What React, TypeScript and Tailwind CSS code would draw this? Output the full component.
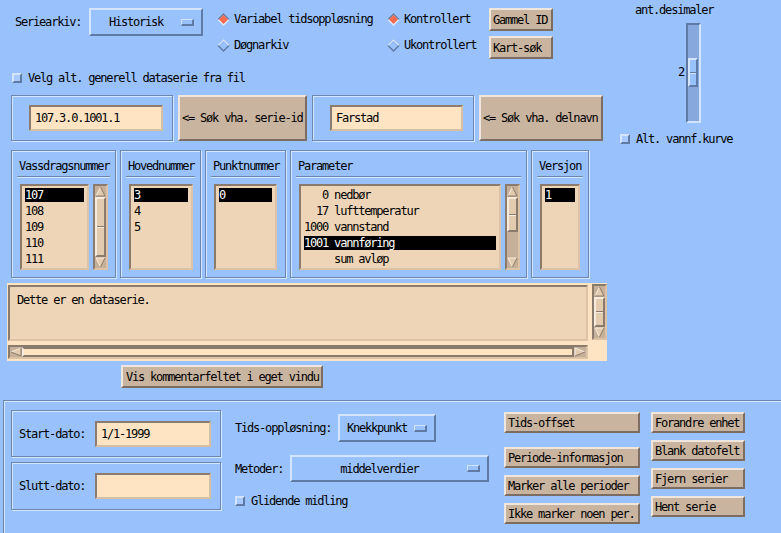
import React from "react";

const raisedTan =
  "border-2 border-t-[#efe7de] border-l-[#efe7de] border-r-[#7b6d61] border-b-[#7b6d61] bg-[#c9b49f]";
const raisedBlue =
  "border-2 border-t-[#d3e4ff] border-l-[#d3e4ff] border-r-[#5f7aa4] border-b-[#5f7aa4]";
const sunkenTan =
  "border-2 border-t-[#8b7b6d] border-l-[#8b7b6d] border-r-[#dcc3a6] border-b-[#dcc3a6]";

function Frame({ className, children }: { className: string; children?: React.ReactNode }) {
  return (
    <div className={"border border-[#6b86b1] shadow-[inset_1px_1px_0_#d5e6ff,1px_1px_0_#d5e6ff] " + className}>
      {children}
    </div>
  );
}

function Btn({ className, children }: { className: string; children: React.ReactNode }) {
  return (
    <div className={raisedTan + " flex items-center pl-[2px] whitespace-pre " + className}>{children}</div>
  );
}

function Field({ className, value }: { className: string; value?: string }) {
  return (
    <div className={"border-2 border-t-[#8a7c70] border-l-[#8a7c70] border-r-[#d9bfa2] border-b-[#d9bfa2] bg-[#ffe4c4] flex items-center pl-[4px] " + className}>
      {value}
    </div>
  );
}

function OptionMenu({ className, label }: { className: string; label: string }) {
  return (
    <div className={raisedBlue + " flex items-center " + className}>
      <span className="flex-1 text-center">{label}</span>
      <span className="w-[13px] h-[7px] mr-[7px] border-t border-l border-r-2 border-b-2 border-t-[#d3e4ff] border-l-[#d3e4ff] border-r-[#5f7aa4] border-b-[#5f7aa4]" />
    </div>
  );
}

function Radio({ on, label }: { on: boolean; label: string }) {
  return (
    <div className="flex items-center gap-[4px] h-[14px]">
      <svg width="13" height="13" viewBox="0 0 13 13" className="shrink-0">
        <polygon points="6.5,0 13,6.5 6.5,13 0,6.5" fill={on ? "#dbe9ff" : "#5f7aa4"} />
        <polygon points="0,6.5 6.5,0 13,6.5 11,6.5 6.5,2 2,6.5" fill={on ? "#5f7aa4" : "#dbe9ff"} />
        <polygon points="6.5,2 11,6.5 6.5,11 2,6.5" fill={on ? "#fa6a4e" : "#99c2fd"} />
      </svg>
      <span>{label}</span>
    </div>
  );
}

function Check({ label, className }: { label: string; className: string }) {
  return (
    <div className={"flex items-center gap-[6px] " + className}>
      <span className={raisedBlue + " w-[10px] h-[10px] bg-[#a8cafe]"} />
      <span>{label}</span>
    </div>
  );
}

function Arrow({ dir }: { dir: "up" | "down" | "left" | "right" }) {
  const light = "#f6ebdd";
  const dark = "#8b7b6d";
  if (dir === "up")
    return (
      <svg width="11" height="11" viewBox="0 0 11 11" className="shrink-0">
        <polygon points="5.5,1 10,10 1,10" fill="#e3cbb0" />
        <polyline points="1,10 5.5,1" stroke={light} fill="none" />
        <polyline points="5.5,1 10,10 1,10" stroke={dark} fill="none" />
      </svg>
    );
  if (dir === "down")
    return (
      <svg width="11" height="11" viewBox="0 0 11 11" className="shrink-0">
        <polygon points="1,1 10,1 5.5,10" fill="#e3cbb0" />
        <polyline points="5.5,10 1,1 10,1" stroke={light} fill="none" />
        <polyline points="10,1 5.5,10" stroke={dark} fill="none" />
      </svg>
    );
  if (dir === "left")
    return (
      <svg width="12" height="10" viewBox="0 0 12 10" className="shrink-0">
        <polygon points="1,5 11,1 11,9" fill="#e3cbb0" />
        <polyline points="11,1 1,5" stroke={light} fill="none" />
        <polyline points="1,5 11,9 11,1" stroke={dark} fill="none" />
      </svg>
    );
  return (
    <svg width="12" height="10" viewBox="0 0 12 10" className="shrink-0">
      <polygon points="1,1 11,5 1,9" fill="#e3cbb0" />
      <polyline points="1,9 1,1 11,5" stroke={light} fill="none" />
      <polyline points="11,5 1,9" stroke={dark} fill="none" />
    </svg>
  );
}

function VScroll({ className, thumb }: { className: string; thumb: string }) {
  return (
    <div className={sunkenTan + " flex flex-col items-center bg-[#c6b09a] " + className}>
      <Arrow dir="up" />
      <div className="flex-1 w-full flex flex-col">
        <div className={"w-full border-2 border-t-[#f6ebdd] border-l-[#f6ebdd] border-r-[#8b7b6d] border-b-[#8b7b6d] bg-[#e3cbb0] flex items-center justify-center " + thumb}>
          <span className="w-[7px] h-[2px] border-t border-b border-t-[#8b7b6d] border-b-[#f6ebdd]" />
        </div>
      </div>
      <Arrow dir="down" />
    </div>
  );
}

function ListBox({ className, rows, selected }: { className: string; rows: string[]; selected: number }) {
  return (
    <div className={sunkenTan + " bg-[#eed5b7] px-[3px] pt-[1px] overflow-hidden " + className}>
      {rows.map((row, i) => (
        <div key={i} className="h-[16px] flex items-center">
          <div className={"h-[14px] w-full whitespace-pre leading-[15px] " + (i === selected ? "bg-black text-white" : "")}>
            {row}
          </div>
        </div>
      ))}
    </div>
  );
}

function ListFrame({ className, title, children }: { className: string; title: string; children: React.ReactNode }) {
  return (
    <Frame className={"flex flex-col " + className}>
      <div className="pl-[7px] pt-[8px] h-[21px]">{title}</div>
      <div className="mx-[5px] mt-[4px] h-[2px] border-t border-b border-t-[#6b86b1] border-b-[#d5e6ff]" />
      <div className="flex gap-[4px] ml-[8px] mt-[6px]">{children}</div>
    </Frame>
  );
}

export default function App() {
  return (
    <div className="w-[781px] h-[533px] overflow-hidden flex flex-col bg-[#99c2fd] text-black text-[12px] leading-[14px] tracking-[-1.2px] font-['DejaVu_Sans_Mono',monospace]">
      {/* top area */}
      <div className="flex h-[150px] shrink-0">
        <div className="w-[610px] shrink-0">
          <div className="flex h-[66px] pt-[8px]">
            <div className="w-[89px] pl-[15px] h-[28px] flex items-center">Seriearkiv:</div>
            <OptionMenu className="w-[114px] h-[28px]" label="Historisk" />
            <div className="ml-[14px] w-[170px] pt-[4px] flex flex-col gap-[12px]">
              <Radio on label="Variabel tidsoppløsning" />
              <Radio on={false} label="Døgnarkiv" />
            </div>
            <div className="w-[102px] pt-[4px] flex flex-col gap-[12px]">
              <Radio on label="Kontrollert" />
              <Radio on={false} label="Ukontrollert" />
            </div>
            <div className="flex flex-col gap-[5px]">
              <Btn className="w-[64px] h-[23px]">Gammel ID</Btn>
              <Btn className="w-[64px] h-[23px]">Kart-søk</Btn>
            </div>
          </div>
          <Check className="ml-[12px] mt-[7px] h-[10px]" label="Velg alt. generell dataserie fra fil" />
          <div className="flex ml-[11px] mt-[12px] h-[46px] gap-[5px]">
            <Frame className="w-[162px] flex items-center pl-[17px]">
              <Field className="w-[134px] h-[26px]" value="107.3.0.1001.1" />
            </Frame>
            <Btn className="w-[129px]">{"<= Søk vha. serie-id"}</Btn>
            <Frame className="w-[162px] flex items-center pl-[17px]">
              <Field className="w-[133px] h-[26px]" value="Farstad" />
            </Frame>
            <Btn className="w-[124px]">{"<= Søk vha. delnavn"}</Btn>
          </div>
        </div>
        <div className="w-[171px] flex flex-col pt-[3px]">
          <div className="pl-[25px]">ant.desimaler</div>
          <div className="flex ml-[66px] mt-[6px]">
            <div className="w-[10px] pr-[2px] pt-[42px] text-right">2</div>
            <div className="w-[15px] h-[100px] border-2 border-t-[#5f7aa4] border-l-[#5f7aa4] border-r-[#d3e4ff] border-b-[#d3e4ff] bg-[#86a8dc]">
              <div className={raisedBlue + " w-[10px] h-[29px] mt-[33px] bg-[#99c2fd] flex items-center"}>
                <span className="w-full h-[2px] border-t border-b border-t-[#5f7aa4] border-b-[#d3e4ff]" />
              </div>
            </div>
          </div>
          <Check className="ml-[10px] mt-[11px] h-[10px]" label="Alt. vannf.kurve" />
        </div>
      </div>

      {/* lists */}
      <div className="flex ml-[11px] gap-[4px] h-[128px] shrink-0">
        <ListFrame className="w-[105px]" title="Vassdragsnummer">
          <ListBox className="w-[69px] h-[86px]" rows={["107", "108", "109", "110", "111"]} selected={0} />
          <VScroll className="w-[15px] h-[86px]" thumb="flex-1" />
        </ListFrame>
        <ListFrame className="w-[81px]" title="Hovednummer">
          <ListBox className="w-[64px] h-[86px]" rows={["3", "4", "5"]} selected={0} />
        </ListFrame>
        <ListFrame className="w-[81px]" title="Punktnummer">
          <ListBox className="w-[63px] h-[86px]" rows={["0"]} selected={0} />
        </ListFrame>
        <ListFrame className="w-[237px]" title="Parameter">
          <ListBox
            className="w-[202px] h-[86px]"
            rows={["   0 nedbør", "  17 lufttemperatur", "1000 vannstand", "1001 vannføring", "     sum avløp"]}
            selected={3}
          />
          <VScroll className="w-[15px] h-[86px]" thumb="h-[35px]" />
        </ListFrame>
        <ListFrame className="w-[58px]" title="Versjon">
          <ListBox className="w-[40px] h-[86px]" rows={["1"]} selected={0} />
        </ListFrame>
      </div>

      {/* comment */}
      <div className="ml-[7px] mt-[5px] w-[600px] h-[78px] shrink-0 bg-[#ffe4c4] pt-[2px] pl-[1px]">
        <div className="flex gap-[4px]">
          <div className={sunkenTan + " w-[580px] h-[56px] bg-[#eed5b7] px-[7px] pt-[6px]"}>Dette er en dataserie.</div>
          <VScroll className="w-[15px] h-[56px] -mt-[1px]" thumb="flex-1" />
        </div>
        <div className={sunkenTan + " mt-[4px] w-[580px] h-[14px] bg-[#c6b09a] flex items-center"}>
          <Arrow dir="left" />
          <div className="flex-1 h-full border-2 border-t-[#8b7b6d] border-l-[#f6ebdd] border-r-[#8b7b6d] border-b-[#8b7b6d] bg-[#ffe4c4]" />
          <Arrow dir="right" />
        </div>
      </div>

      <Btn className="ml-[121px] mt-[4px] w-[202px] h-[23px] shrink-0 pl-[3px]">Vis kommentarfeltet i eget vindu</Btn>

      {/* bottom */}
      <div className="ml-[3px] mt-[12px] flex-1 border-t border-l border-[#6b86b1] shadow-[inset_1px_1px_0_#d5e6ff] flex pl-[7px] pt-[9px]">
        <div className="flex flex-col gap-[5px]">
          <Frame className="w-[210px] h-[47px] flex items-center pl-[7px]">
            <div className="w-[76px]">Start-dato:</div>
            <Field className="w-[116px] h-[26px] pl-[3px]" value="1/1-1999" />
          </Frame>
          <Frame className="w-[210px] h-[48px] flex items-center pl-[7px]">
            <div className="w-[76px]">Slutt-dato:</div>
            <Field className="w-[116px] h-[26px]" />
          </Frame>
        </div>
        <div className="ml-[14px] w-[269px] pt-[4px] flex flex-col">
          <div className="flex items-center h-[28px]">
            <div className="w-[103px]">Tids-oppløsning:</div>
            <OptionMenu className="w-[98px] h-[28px]" label="Knekkpunkt" />
          </div>
          <div className="flex items-center h-[27px] mt-[13px]">
            <div className="w-[55px]">Metoder:</div>
            <OptionMenu className="w-[199px] h-[27px]" label="middelverdier" />
          </div>
          <Check className="mt-[14px] h-[10px] gap-[5px]" label="Glidende midling" />
        </div>
        <div className="w-[136px] pt-[2px] flex flex-col">
          <Btn className="h-[21px]">Tids-offset</Btn>
          <Btn className="h-[21px] mt-[14px]">Periode-informasjon</Btn>
          <Btn className="h-[21px] mt-[7px]">Marker alle perioder</Btn>
          <Btn className="h-[21px] mt-[7px]">Ikke marker noen per.</Btn>
        </div>
        <div className="ml-[11px] w-[94px] pt-[2px] flex flex-col gap-[7px]">
          <Btn className="h-[21px]">Forandre enhet</Btn>
          <Btn className="h-[21px]">Blank datofelt</Btn>
          <Btn className="h-[21px]">Fjern serier</Btn>
          <Btn className="h-[21px]">Hent serie</Btn>
        </div>
      </div>
    </div>
  );
}
